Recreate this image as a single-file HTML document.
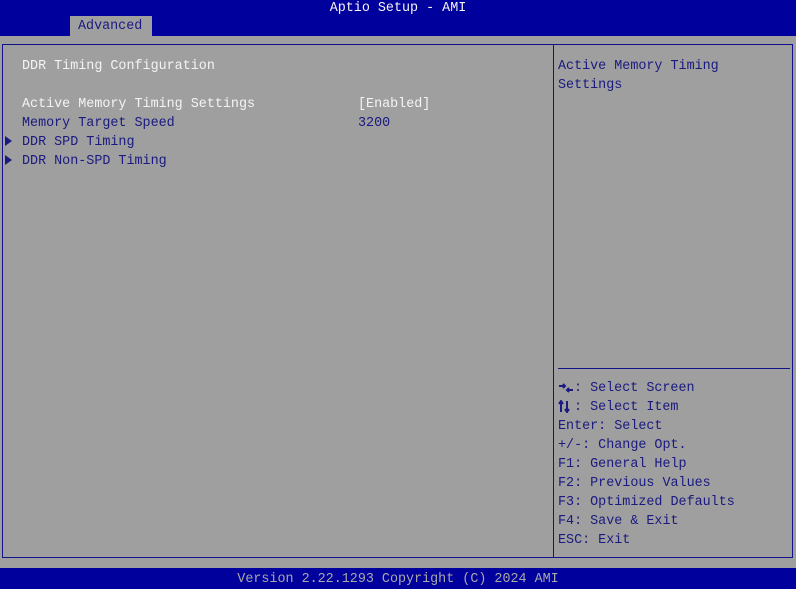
<!DOCTYPE html>
<html><head><style>
body{margin:0;width:796px;height:589px;background:#9f9f9f;position:relative;overflow:hidden;font-family:"Liberation Mono","DejaVu Sans Mono",monospace;font-size:13.4px;}
.t{position:absolute;white-space:pre;line-height:19px;color:#1a1a80}
.w{color:#f4f4f4}
.ic{display:inline-block;width:16px;height:19px;vertical-align:top}
#top{position:absolute;left:0;top:0;width:796px;height:36px;background:#00009c}
#tab{position:absolute;left:70px;top:16px;width:82px;height:20px;background:#9f9f9f}
#box{position:absolute;left:2px;top:44px;width:789px;height:512px;border:1px solid #12128a;}
#div{position:absolute;left:553px;top:44px;width:1px;height:514px;background:#12128a}
#hl{position:absolute;left:558px;top:368px;width:232px;height:1px;background:#12128a}
#bot{position:absolute;left:0;top:568px;width:796px;height:21px;background:#00009c}
</style></head><body>
<div id="top"></div>
<div class="t w" style="left:0;width:796px;text-align:center;top:-1px">Aptio Setup - AMI</div>
<div id="tab"></div>
<div class="t" style="left:78px;top:17px">Advanced</div>
<div id="box"></div><div id="div"></div><div id="hl"></div>
<div class="t w" style="left:22px;top:57px">DDR Timing Configuration</div>
<div class="t w" style="left:22px;top:95px">Active Memory Timing Settings</div>
<div class="t w" style="left:358px;top:95px">[Enabled]</div>
<div class="t" style="left:22px;top:114px">Memory Target Speed</div>
<div class="t" style="left:358px;top:114px">3200</div>
<svg style="position:absolute;left:5px;top:136px" width="8" height="10"><path d="M0 0L7 5L0 10Z" fill="#1a1a80"/></svg>
<svg style="position:absolute;left:5px;top:155px" width="8" height="10"><path d="M0 0L7 5L0 10Z" fill="#1a1a80"/></svg>
<div class="t" style="left:22px;top:133px">DDR SPD Timing</div>
<div class="t" style="left:22px;top:152px">DDR Non-SPD Timing</div>
<div class="t" style="left:558px;top:57px">Active Memory Timing
Settings</div>
<svg style="position:absolute;left:558px;top:382px" width="16" height="12"><path d="M1 4H7M5 2L7 4L5 6M15 8H9M11 6L9 8L11 10" stroke="#1a1a80" stroke-width="2" fill="none"/></svg>
<svg style="position:absolute;left:558px;top:400px" width="16" height="13"><path d="M3 12V2M1 4L3 1L5 4M9 1V11M7 9L9 12L11 9" stroke="#1a1a80" stroke-width="2" fill="none"/></svg>
<div class="t" style="left:574px;top:379px">: Select Screen
: Select Item</div>
<div class="t" style="left:558px;top:417px">Enter: Select
+/-: Change Opt.
F1: General Help
F2: Previous Values
F3: Optimized Defaults
F4: Save &amp; Exit
ESC: Exit</div>
<div id="bot"></div>
<div class="t" style="left:0;width:796px;text-align:center;top:570px;color:#a8a8a8">Version 2.22.1293 Copyright (C) 2024 AMI</div>
</body></html>
